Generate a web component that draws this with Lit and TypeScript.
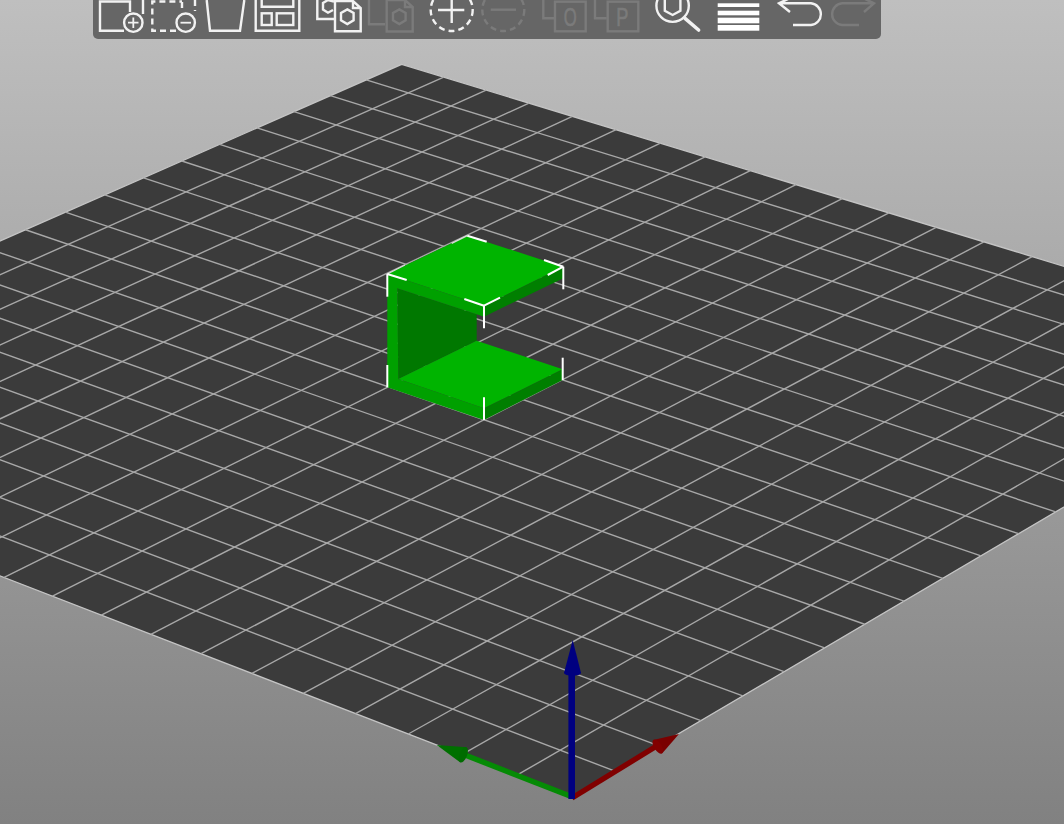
import { css, html, LitElement, svg } from 'lit';
import { customElement } from 'lit/decorators.js';

type Pt = [number, number];

// plate corners on screen, the bed is a 20 x 20 grid seen in perspective
const BACK: Pt = [401.7, 64.3];
const RIGHT: Pt = [1333.4, 348.5];
const FRONT: Pt = [571, 797];
const LEFT: Pt = [-405, 419];
const CELLS = 20;

function projector(): (s: number, t: number) => Pt {
  const dx1 = RIGHT[0] - FRONT[0];
  const dx2 = LEFT[0] - FRONT[0];
  const sx = BACK[0] - RIGHT[0] + FRONT[0] - LEFT[0];
  const dy1 = RIGHT[1] - FRONT[1];
  const dy2 = LEFT[1] - FRONT[1];
  const sy = BACK[1] - RIGHT[1] + FRONT[1] - LEFT[1];
  const den = dx1 * dy2 - dx2 * dy1;
  const g = (sx * dy2 - dx2 * sy) / den;
  const h = (dx1 * sy - sx * dy1) / den;
  const a = RIGHT[0] - BACK[0] + g * RIGHT[0];
  const b = LEFT[0] - BACK[0] + h * LEFT[0];
  const d = RIGHT[1] - BACK[1] + g * RIGHT[1];
  const e = LEFT[1] - BACK[1] + h * LEFT[1];
  return (s, t) => {
    const w = g * s + h * t + 1;
    return [(a * s + b * t + BACK[0]) / w, (d * s + e * t + BACK[1]) / w];
  };
}

const project = projector();

function gridLines() {
  const lines = [];
  for (let i = 1; i < CELLS; i++) {
    const k = i / CELLS;
    const [x1, y1] = project(0, k);
    const [x2, y2] = project(1, k);
    const [x3, y3] = project(k, 0);
    const [x4, y4] = project(k, 1);
    lines.push(svg`<line x1=${x1} y1=${y1} x2=${x2} y2=${y2}></line>`);
    lines.push(svg`<line x1=${x3} y1=${y3} x2=${x4} y2=${y4}></line>`);
  }
  return lines;
}

// selection corners of the bounding box
const TICKS: number[][] = [
  [387.3, 274, 406.7, 280],
  [387.3, 274, 387.3, 296.7],
  [467.3, 235.7, 486.7, 241.7],
  [563.3, 266.7, 544, 260],
  [563.3, 266.7, 547.7, 275],
  [563.3, 266.7, 563.3, 289.3],
  [484, 305.7, 464.3, 299],
  [484, 305.7, 500, 297.7],
  [484, 305.7, 484, 328.3],
  [387.3, 387.3, 387.3, 365],
  [484, 420, 484, 397.3],
  [562.7, 380, 562.7, 357.7],
];

// same corners, but the part of the tick that runs along the grey back edges
const SOFT_TICKS: number[][] = [
  [387.3, 274, 405, 265],
  [467.3, 235.7, 451.7, 243.3],
];

// toolbar icons, drawn in page coordinates, x is the left edge of the cell
const ICONS: { x: number; gap?: boolean; off?: boolean; body: unknown }[] = [
  {
    x: 95,
    body: svg`
      <path d="M130 12V1.5H100V30.7H124M143 0V14"></path>
      <circle cx="133.3" cy="22.7" r="9.2"></circle>
      <path class="thin" d="M128 22.7H138.5M133.3 17.5V28"></path>`,
  },
  {
    x: 147,
    body: svg`
      <path class="dash" d="M195 0V11M182 2V11M176 30.7H152.3V1.5H182"></path>
      <circle cx="185.7" cy="22.7" r="9.2"></circle>
      <path class="thin" d="M180.5 22.7H191"></path>`,
  },
  { x: 199, body: svg`<path d="M206.7 0L210 30.7H240L244.3 0"></path>` },
  {
    x: 251,
    body: svg`
      <path d="M255.7 0V30.7H299.3V0M261.7 0V6.7H293.3V0"></path>
      <rect x="261.7" y="13.3" width="10" height="11.7"></rect>
      <rect x="276.7" y="13.3" width="16.6" height="11.7"></rect>`,
  },
  {
    x: 312,
    gap: true,
    body: svg`
      <path d="M317.3 0V19H335M334 1.5L328 0L323 3V9.5L328 12.7L333 10"></path>
      <path d="M335 1H353L360.7 8V31.3H335ZM353 1V8H360.7"></path>
      <path d="M347.3 9.4L353.6 13V20.4L347.3 24L341 20.4V13Z"></path>`,
  },
  {
    x: 364,
    off: true,
    body: svg`
      <path d="M369 0V24.3H385"></path>
      <path d="M386.7 0H405L412.7 7V31.5H386.7ZM405 0V7H412.7"></path>
      <path d="M399.3 9.4L405.6 13V20.4L399.3 24L393 20.4V13Z"></path>`,
  },
  {
    x: 425,
    gap: true,
    body: svg`
      <circle class="dash" cx="451.7" cy="10" r="21"></circle>
      <path d="M438 10H464.3M451.7 0V23"></path>`,
  },
  {
    x: 477,
    off: true,
    body: svg`
      <circle class="dash" cx="503.3" cy="10" r="21"></circle>
      <path d="M490.7 9.7H516"></path>`,
  },
  {
    x: 538,
    gap: true,
    off: true,
    body: svg`
      <path d="M543.3 0V18.3H554.3"></path>
      <rect x="555" y="1.7" width="30.7" height="29.6"></rect>
      <text class="letter" transform="translate(570.3 25.7) scale(0.64 1)" text-anchor="middle">O</text>`,
  },
  {
    x: 590,
    off: true,
    body: svg`
      <path d="M595 0V18.3H606.7"></path>
      <rect x="607.7" y="1.7" width="30.6" height="29.6"></rect>
      <text class="letter" transform="translate(622.3 25.7) scale(0.7 1)" text-anchor="middle">P</text>`,
  },
  {
    x: 651,
    gap: true,
    body: svg`
      <circle cx="672.6" cy="5.7" r="16.2"></circle>
      <path d="M664.8 0V10.7L672.6 15L680.4 10.7V0"></path>
      <path class="handle" d="M685 18.3L698.6 30"></path>`,
  },
  {
    x: 712,
    gap: true,
    body: svg`
      <rect class="solid" x="717.7" y="3.3" width="41.6" height="3.7"></rect>
      <rect class="solid" x="717.7" y="10.7" width="41.6" height="4.6"></rect>
      <rect class="solid" x="717.7" y="17.7" width="41.6" height="5.6"></rect>
      <rect class="solid" x="717.7" y="25" width="41.6" height="5.7"></rect>`,
  },
  {
    x: 773,
    gap: true,
    body: svg`<path d="M790 -2L779 3.3L790 12M779 3.3H811A10.9 10.9 0 0 1 811 25H793"></path>`,
  },
  {
    x: 825,
    off: true,
    body: svg`<path d="M863 -2L874 3.3L864 12M874 3.3H842A10.9 10.9 0 0 0 842 25H859"></path>`,
  },
];

@customElement('app-root')
export class AppRoot extends LitElement {
  static styles = css`
    :host {
      display: block;
      position: relative;
      width: 1064px;
      height: 824px;
      overflow: hidden;
      background: linear-gradient(#bfbfbf, #818181);
    }

    .scene {
      display: block;
      width: 1064px;
      height: 824px;
    }

    .plate {
      fill: #3b3b3b;
      stroke: #c4c4c4;
      stroke-width: 1.3;
    }

    .grid line {
      stroke: #a8a8a8;
      stroke-width: 1.4;
    }

    .ticks line {
      stroke: #fff;
      stroke-width: 2;
    }

    .ticks.soft line {
      stroke: #d8d8d8;
      stroke-width: 1.4;
    }

    .toolbar {
      position: absolute;
      left: 93px;
      top: 0;
      display: flex;
      height: 39px;
      padding: 0 4px 0 2px;
      background: #666;
      border-radius: 0 0 5px 5px;
    }

    .tool {
      display: block;
      width: 52px;
      height: 39px;
      fill: none;
      stroke: #f2f2f2;
      stroke-width: 2.4;
    }

    .tool.gap {
      margin-left: 9px;
    }

    .tool.off {
      stroke: #7b7b7b;
    }

    .tool .thin {
      stroke-width: 1.8;
    }

    .tool .dash {
      stroke-dasharray: 6 4;
    }

    .tool .handle {
      stroke-width: 3.6;
      stroke-linecap: round;
    }

    .tool .solid {
      fill: #fff;
      stroke: none;
    }

    .tool .letter {
      font: 26px 'Liberation Sans', sans-serif;
      fill: #7b7b7b;
      stroke: #7b7b7b;
      stroke-width: 0.7;
    }
  `;

  private renderPart() {
    return svg`
      <g>
        <polygon fill="#00b400" points="387.3,274 467.3,235.7 563.3,266.7 484,305.7"></polygon>
        <polygon fill="#007f00" points="484,305.7 563.3,266.7 563.3,278.3 484,316.7"></polygon>
        <polygon fill="#007800" points="397.3,288.3 476.7,314.3 476.7,340.7 398.3,379"></polygon>
        <polygon fill="#00b400" points="398.3,379 476.7,340.7 562.7,369.3 484,408.3"></polygon>
        <polygon fill="#007f00" points="484,408.3 562.7,369.3 562.7,380 484,420"></polygon>
        <polygon
          fill="#00a000"
          points="387.3,274 484,305.7 484,316.7 476.7,314.3 397.3,288.3 398.3,379 484,408.3 484,420 387.3,387.3"
        ></polygon>
      </g>
      <g class="ticks soft">
        ${SOFT_TICKS.map((t) => svg`<line x1=${t[0]} y1=${t[1]} x2=${t[2]} y2=${t[3]}></line>`)}
      </g>
      <g class="ticks">
        ${TICKS.map((t) => svg`<line x1=${t[0]} y1=${t[1]} x2=${t[2]} y2=${t[3]}></line>`)}
      </g>`;
  }

  private renderAxes() {
    return svg`
      <line x1="570" y1="796" x2="465" y2="755" stroke="#058a05" stroke-width="5.4"></line>
      <polygon fill="#007000" points="436.7,745 466.7,747.3 460,762.3"></polygon>
      <ellipse cx="463.3" cy="754.8" rx="3.8" ry="8.2" transform="rotate(22 463.3 754.8)" fill="#006c00"></ellipse>
      <line x1="572" y1="798" x2="658.3" y2="745" stroke="#800000" stroke-width="5.4"></line>
      <polygon fill="#7a0000" points="679,734 653.3,740 662.3,753.3"></polygon>
      <ellipse cx="657.8" cy="746.6" rx="3.8" ry="8" transform="rotate(-32 657.8 746.6)" fill="#820000"></ellipse>
      <rect x="568.4" y="672" width="6.6" height="127" fill="#000080"></rect>
      <polygon fill="#000080" points="572.7,640 581,673 564,673"></polygon>
      <ellipse cx="572.5" cy="673" rx="8.5" ry="2.8" fill="#000080"></ellipse>`;
  }

  protected render() {
    const outline = [project(0, 0), project(1, 0), project(1, 1), project(0, 1)]
      .map((p) => p.join(','))
      .join(' ');
    return html`
      <svg class="scene" viewBox="0 0 1064 824">
        <polygon class="plate" points=${outline}></polygon>
        <g class="grid">${gridLines()}</g>
        ${this.renderPart()} ${this.renderAxes()}
      </svg>
      <div class="toolbar">
        ${ICONS.map(
          (i) => html`<svg
            class="tool ${i.gap ? 'gap' : ''} ${i.off ? 'off' : ''}"
            viewBox="${i.x} 0 52 39"
          >
            ${i.body}
          </svg>`
        )}
      </div>
    `;
  }
}
